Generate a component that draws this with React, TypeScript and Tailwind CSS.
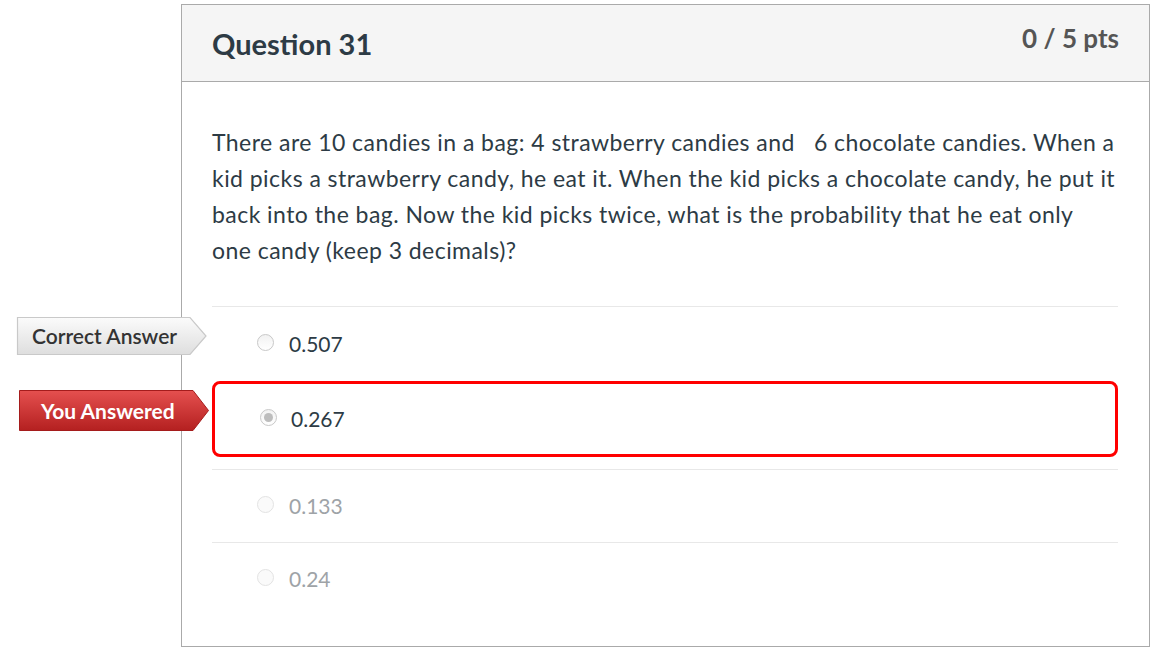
import React from 'react';

type Answer = {
    text: string;
    state: 'correct' | 'chosen' | 'other';
};

const answers: Answer[] = [
    { text: '0.507', state: 'correct' },
    { text: '0.267', state: 'chosen' },
    { text: '0.133', state: 'other' },
    { text: '0.24', state: 'other' },
];

function Radio({ checked, muted }: { checked?: boolean; muted?: boolean }) {
    return (
        <span
            className={`flex shrink-0 items-center justify-center rounded-full border ${
                checked ? 'h-[17px] w-[17px]' : 'h-[17px] w-[17px]'
            } ${muted ? 'border-[#e3e3e3] bg-[#fafafa]' : 'border-[#c8c8c8] bg-gradient-to-b from-[#f2f2f2] to-white'}`}
        >
            {checked && <span className="h-[9px] w-[9px] rounded-full bg-[#bdbdbd]" />}
        </span>
    );
}

function ArrowLabel({ variant, children }: { variant: 'correct' | 'wrong'; children: React.ReactNode }) {
    const correct = variant === 'correct';
    return (
        <div
            className={`absolute flex items-center ${
                correct ? 'left-[-196px] top-[9px] h-[40px] w-[192px]' : 'left-[-196px] top-[6px] h-[41px] w-[190px]'
            }`}
        >
            <svg className="absolute inset-0 h-full w-full" viewBox={correct ? '0 0 192 40' : '0 0 190 41'} preserveAspectRatio="none">
                <defs>
                    <linearGradient id={`g-${variant}`} x1="0" y1="0" x2="0" y2="1">
                        {correct ? (
                            <>
                                <stop offset="0" stopColor="#fbfbfb" />
                                <stop offset="1" stopColor="#dedede" />
                            </>
                        ) : (
                            <>
                                <stop offset="0" stopColor="#e5504f" />
                                <stop offset="1" stopColor="#b42020" />
                            </>
                        )}
                    </linearGradient>
                </defs>
                {correct ? (
                    <path d="M1.5 1.5 H174 L190 20 L174 38.5 H1.5 Z" fill={`url(#g-${variant})`} stroke="#c9c9c9" strokeWidth="1.2" />
                ) : (
                    <path d="M0.5 0.5 H174 L189.5 20.5 L174 40.5 H0.5 Z" fill={`url(#g-${variant})`} stroke="#a51c1c" strokeWidth="1" />
                )}
            </svg>
            <span
                className={`relative ${
                    correct ? 'pl-[16px] text-[21px] font-semibold text-[#333]' : 'pl-[22px] text-[21px] font-bold text-white'
                }`}
            >
                {children}
            </span>
        </div>
    );
}

export default function App() {
    return (
        <div className="min-h-[672px] bg-white pt-[4px] font-['Lato','Noto_Sans',sans-serif] text-[#2d3b45]">
            <div className="ml-[181px] h-[643px] w-[969px] border border-[#aaaaaa] bg-white">
                <div className="flex h-[77px] items-start justify-between border-b border-[#aaaaaa] bg-[#f5f5f5] pl-[30px] pr-[30px]">
                    <h2 className="mt-[22px] text-[29px] font-bold leading-[34px]">Question 31</h2>
                    <div className="mt-[17px] text-[26px] font-bold leading-[32px] text-[#555]">0 / 5 pts</div>
                </div>

                <div className="pl-[30px] pr-[31px] pt-[42px]">
                    <p className="text-[23px] leading-[36px] tracking-[0.45px]">
                        There are 10 candies in a bag: 4 strawberry candies and{'\u00a0\u00a0'} 6 chocolate candies. When a
                        <br />
                        kid picks a strawberry candy, he eat it. When the kid picks a chocolate candy, he put it
                        <br />
                        back into the bag. Now the kid picks twice, what is the probability that he eat only
                        <br />
                        one candy (keep 3 decimals)?
                    </p>

                    <div className="mt-[38px]">
                        {answers.map((a) => {
                            if (a.state === 'chosen') {
                                return (
                                    <div key={a.text} className="relative mb-[12px] flex h-[76px] items-center rounded-[8px] border-[3px] border-[#ff0000] pl-[45px]">
                                        <ArrowLabel variant="wrong">You Answered</ArrowLabel>
                                        <div className="-mt-[4px]">
                                            <Radio checked />
                                        </div>
                                        <span className="ml-[14px] text-[21px]">{a.text}</span>
                                    </div>
                                );
                            }
                            return (
                                <div
                                    key={a.text}
                                    className={`relative flex items-center border-t border-[#e8e8e8] pl-[45px] ${
                                        a.state === 'correct' ? 'h-[75px]' : 'h-[73px]'
                                    }`}
                                >
                                    {a.state === 'correct' && <ArrowLabel variant="correct">Correct Answer</ArrowLabel>}
                                    <div className="-mt-[3px]">
                                        <Radio muted={a.state === 'other'} />
                                    </div>
                                    <span className={`ml-[15px] text-[21px] ${a.state === 'other' ? 'text-[#9ea3a7]' : ''}`}>{a.text}</span>
                                </div>
                            );
                        })}
                    </div>
                </div>
            </div>
        </div>
    );
}
